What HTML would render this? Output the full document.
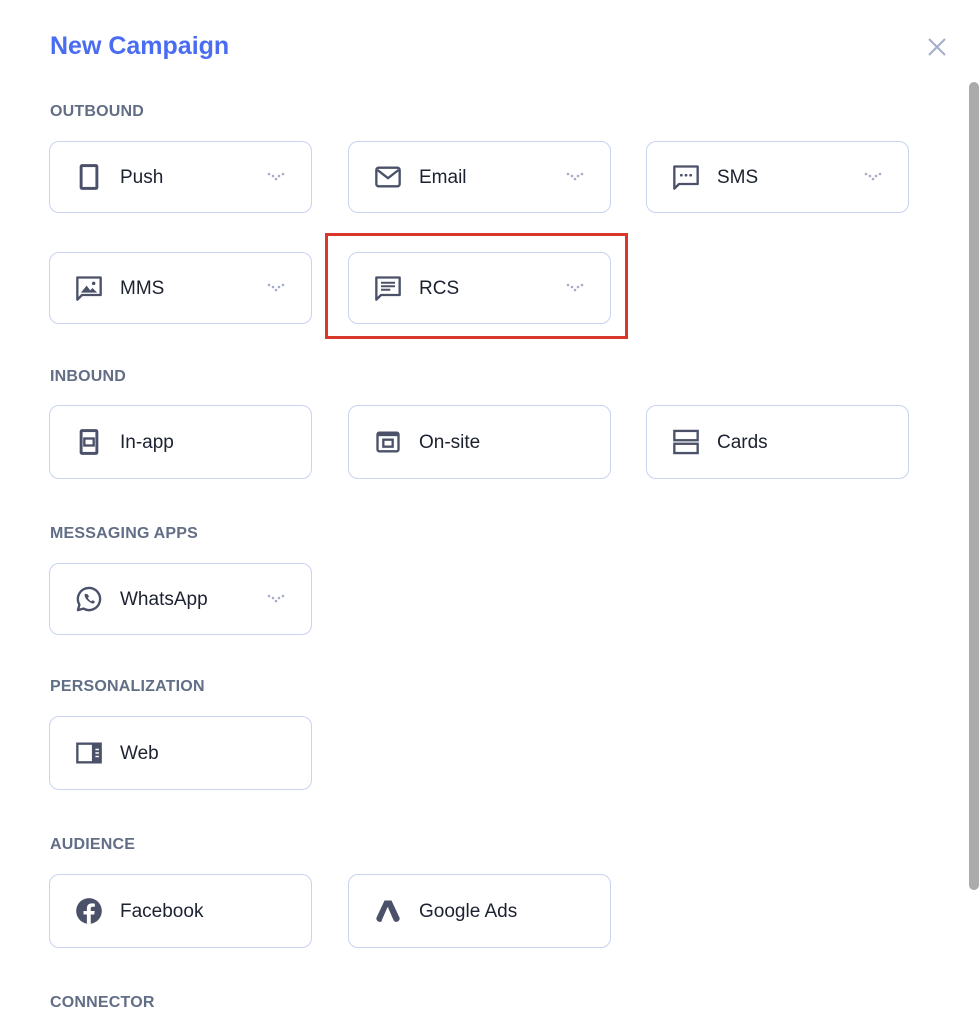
<!DOCTYPE html>
<html><head><meta charset="utf-8"><style>
*{margin:0;padding:0;box-sizing:border-box}
body{width:980px;height:1032px;background:#fff;position:relative;overflow:hidden;font-family:"Liberation Sans",sans-serif}
.t{position:absolute;left:50px;top:32px;font-size:25px;font-weight:bold;color:#4a6cf2}
.x{position:absolute;left:927px;top:37px}
.h{position:absolute;left:50px;font-size:16px;font-weight:bold;color:#626d86;letter-spacing:.2px}
.c{position:absolute;width:263px;height:72px;border:1px solid #c9d3f2;border-radius:10px;background:#fff}
.c svg.i{position:absolute;left:25px;top:21px}
.c span{position:absolute;left:70px;top:1px;line-height:70px;font-size:19px;color:#1c2130}
.c svg.v{position:absolute;left:217px;top:30px}
.sb{position:absolute;left:969px;top:82px;width:10px;height:808px;background:#ababab;border-radius:5px}
.red{position:absolute;left:325px;top:233px;width:303px;height:106px;border:3px solid #d8382c}
</style></head><body>
<div class="t">New Campaign</div>
<svg class="x" width="20" height="20" viewBox="0 0 20 20"><path d="M2 2L18 18M18 2L2 18" stroke="#a3aec9" stroke-width="2"/></svg>
<div class="sb"></div>

<div class="h" style="top:103px">OUTBOUND</div>
<div class="c" style="left:49px;top:141px"><svg class="i" width="28" height="28" viewBox="0 0 24 24"><rect x="4" y="1" width="16" height="22" rx="2" fill="#4a5168"/><rect x="6.5" y="3.5" width="11" height="17" fill="#fff"/></svg><span>Push</span><svg class="v" width="18" height="10"><g fill="#a6acc8"><circle cx="2" cy="2" r="1.3"/><circle cx="6" cy="4" r="1.3"/><circle cx="9" cy="7" r="1.3"/><circle cx="12" cy="4" r="1.3"/><circle cx="16" cy="2" r="1.3"/></g></svg></div>
<div class="c" style="left:348px;top:141px"><svg class="i" width="28" height="28" viewBox="0 0 24 24"><rect x="2" y="4" width="20" height="16" rx="2" fill="none" stroke="#4a5168" stroke-width="2"/><path d="M3 6l9 7 9-7" fill="none" stroke="#4a5168" stroke-width="2"/></svg><span>Email</span><svg class="v" width="18" height="10"><g fill="#a6acc8"><circle cx="2" cy="2" r="1.3"/><circle cx="6" cy="4" r="1.3"/><circle cx="9" cy="7" r="1.3"/><circle cx="12" cy="4" r="1.3"/><circle cx="16" cy="2" r="1.3"/></g></svg></div>
<div class="c" style="left:646px;top:141px"><svg class="i" width="28" height="28" viewBox="0 0 24 24"><path d="M2 3h20v15H6l-4 4z" fill="none" stroke="#4a5168" stroke-width="2" stroke-linejoin="round"/><circle cx="8" cy="10.5" r="1.2" fill="#4a5168"/><circle cx="12" cy="10.5" r="1.2" fill="#4a5168"/><circle cx="16" cy="10.5" r="1.2" fill="#4a5168"/></svg><span>SMS</span><svg class="v" width="18" height="10"><g fill="#a6acc8"><circle cx="2" cy="2" r="1.3"/><circle cx="6" cy="4" r="1.3"/><circle cx="9" cy="7" r="1.3"/><circle cx="12" cy="4" r="1.3"/><circle cx="16" cy="2" r="1.3"/></g></svg></div>
<div class="c" style="left:49px;top:252px"><svg class="i" width="28" height="28" viewBox="0 0 24 24"><path d="M2 3h20v15H6l-4 4z" fill="none" stroke="#4a5168" stroke-width="2" stroke-linejoin="round"/><path d="M5 16l5-6 3 4 2-2 4 4z" fill="#4a5168"/><circle cx="16" cy="8" r="1.5" fill="#4a5168"/></svg><span>MMS</span><svg class="v" width="18" height="10"><g fill="#a6acc8"><circle cx="2" cy="2" r="1.3"/><circle cx="6" cy="4" r="1.3"/><circle cx="9" cy="7" r="1.3"/><circle cx="12" cy="4" r="1.3"/><circle cx="16" cy="2" r="1.3"/></g></svg></div>
<div class="c" style="left:348px;top:252px"><svg class="i" width="28" height="28" viewBox="0 0 24 24"><path d="M2 3h20v15H6l-4 4z" fill="none" stroke="#4a5168" stroke-width="2" stroke-linejoin="round"/><path d="M6 7.5h12M6 10.5h12M6 13.5h8" stroke="#4a5168" stroke-width="1.8"/></svg><span>RCS</span><svg class="v" width="18" height="10"><g fill="#a6acc8"><circle cx="2" cy="2" r="1.3"/><circle cx="6" cy="4" r="1.3"/><circle cx="9" cy="7" r="1.3"/><circle cx="12" cy="4" r="1.3"/><circle cx="16" cy="2" r="1.3"/></g></svg></div>
<div class="red"></div>

<div class="h" style="top:368px">INBOUND</div>
<div class="c" style="left:49px;top:405px;height:74px"><svg class="i" width="28" height="28" viewBox="0 0 24 24" style="top:22px"><rect x="4" y="1" width="16" height="22" rx="2" fill="#4a5168"/><rect x="6.5" y="3.5" width="11" height="17" fill="#fff"/><rect x="8" y="9" width="8" height="6" fill="none" stroke="#4a5168" stroke-width="2"/></svg><span style="line-height:72px">In-app</span></div>
<div class="c" style="left:348px;top:405px;height:74px"><svg class="i" width="28" height="28" viewBox="0 0 24 24" style="top:22px"><rect x="3" y="4" width="18" height="16" rx="1.5" fill="none" stroke="#4a5168" stroke-width="2"/><rect x="3" y="4" width="18" height="3" fill="#4a5168"/><rect x="8" y="10" width="8" height="6" fill="none" stroke="#4a5168" stroke-width="2"/></svg><span style="line-height:72px">On-site</span></div>
<div class="c" style="left:646px;top:405px;height:74px"><svg class="i" width="28" height="28" viewBox="0 0 24 24" style="top:22px"><rect x="2" y="2.5" width="20" height="8" fill="none" stroke="#4a5168" stroke-width="2"/><rect x="2" y="13.5" width="20" height="8" fill="none" stroke="#4a5168" stroke-width="2"/></svg><span style="line-height:72px">Cards</span></div>

<div class="h" style="top:525px">MESSAGING APPS</div>
<div class="c" style="left:49px;top:563px"><svg class="i" width="28" height="28" viewBox="0 0 24 24"><path d="M12 2.5a9.5 9.5 0 1 1-4.8 17.7L2.5 21.5l1.3-4.6A9.5 9.5 0 0 1 12 2.5z" fill="none" stroke="#4a5168" stroke-width="2" stroke-linejoin="round"/><path d="M8.5 7.5c-.8 1 .2 4 2.5 6s4.5 3 5.5 2l.5-1.5-2-1-1 1c-1-.5-2.5-2-3-3l1-1-1-2z" fill="#4a5168"/></svg><span>WhatsApp</span><svg class="v" width="18" height="10"><g fill="#a6acc8"><circle cx="2" cy="2" r="1.3"/><circle cx="6" cy="4" r="1.3"/><circle cx="9" cy="7" r="1.3"/><circle cx="12" cy="4" r="1.3"/><circle cx="16" cy="2" r="1.3"/></g></svg></div>

<div class="h" style="top:678px">PERSONALIZATION</div>
<div class="c" style="left:49px;top:716px;height:74px"><svg class="i" width="28" height="28" viewBox="0 0 24 24" style="top:22px"><rect x="2" y="4" width="20" height="16" fill="none" stroke="#4a5168" stroke-width="2"/><path d="M15.5 4v16" stroke="#4a5168" stroke-width="2"/><rect x="16" y="4" width="6" height="16" fill="#4a5168"/><path d="M17.5 9h3M17.5 12h3M17.5 15h3" stroke="#fff" stroke-width="1.2"/></svg><span style="line-height:72px">Web</span></div>

<div class="h" style="top:836px">AUDIENCE</div>
<div class="c" style="left:49px;top:874px;height:74px"><svg class="i" width="28" height="28" viewBox="0 0 24 24" style="top:22px"><circle cx="12" cy="12" r="11" fill="#4a5168"/><path d="M13.5 23v-8h3l.4-3h-3.4v-2c0-1 .3-1.6 1.7-1.6h1.8V5.7c-.4 0-1.4-.2-2.6-.2-2.6 0-4.2 1.5-4.2 4.3V12H7.3v3h2.9v8z" fill="#fff"/></svg><span style="line-height:72px">Facebook</span></div>
<div class="c" style="left:348px;top:874px;height:74px"><svg class="i" width="28" height="28" viewBox="0 0 24 24" style="top:22px"><path d="M9 3h6l7 15a3 3 0 0 1-5 2.5L12 9 7 20.5A3 3 0 0 1 2 18z" fill="#4a5168"/><path d="M12 9L7 20.5" stroke="#fff" stroke-width="1"/></svg><span style="line-height:72px">Google Ads</span></div>

<div class="h" style="top:994px">CONNECTOR</div>
</body></html>
